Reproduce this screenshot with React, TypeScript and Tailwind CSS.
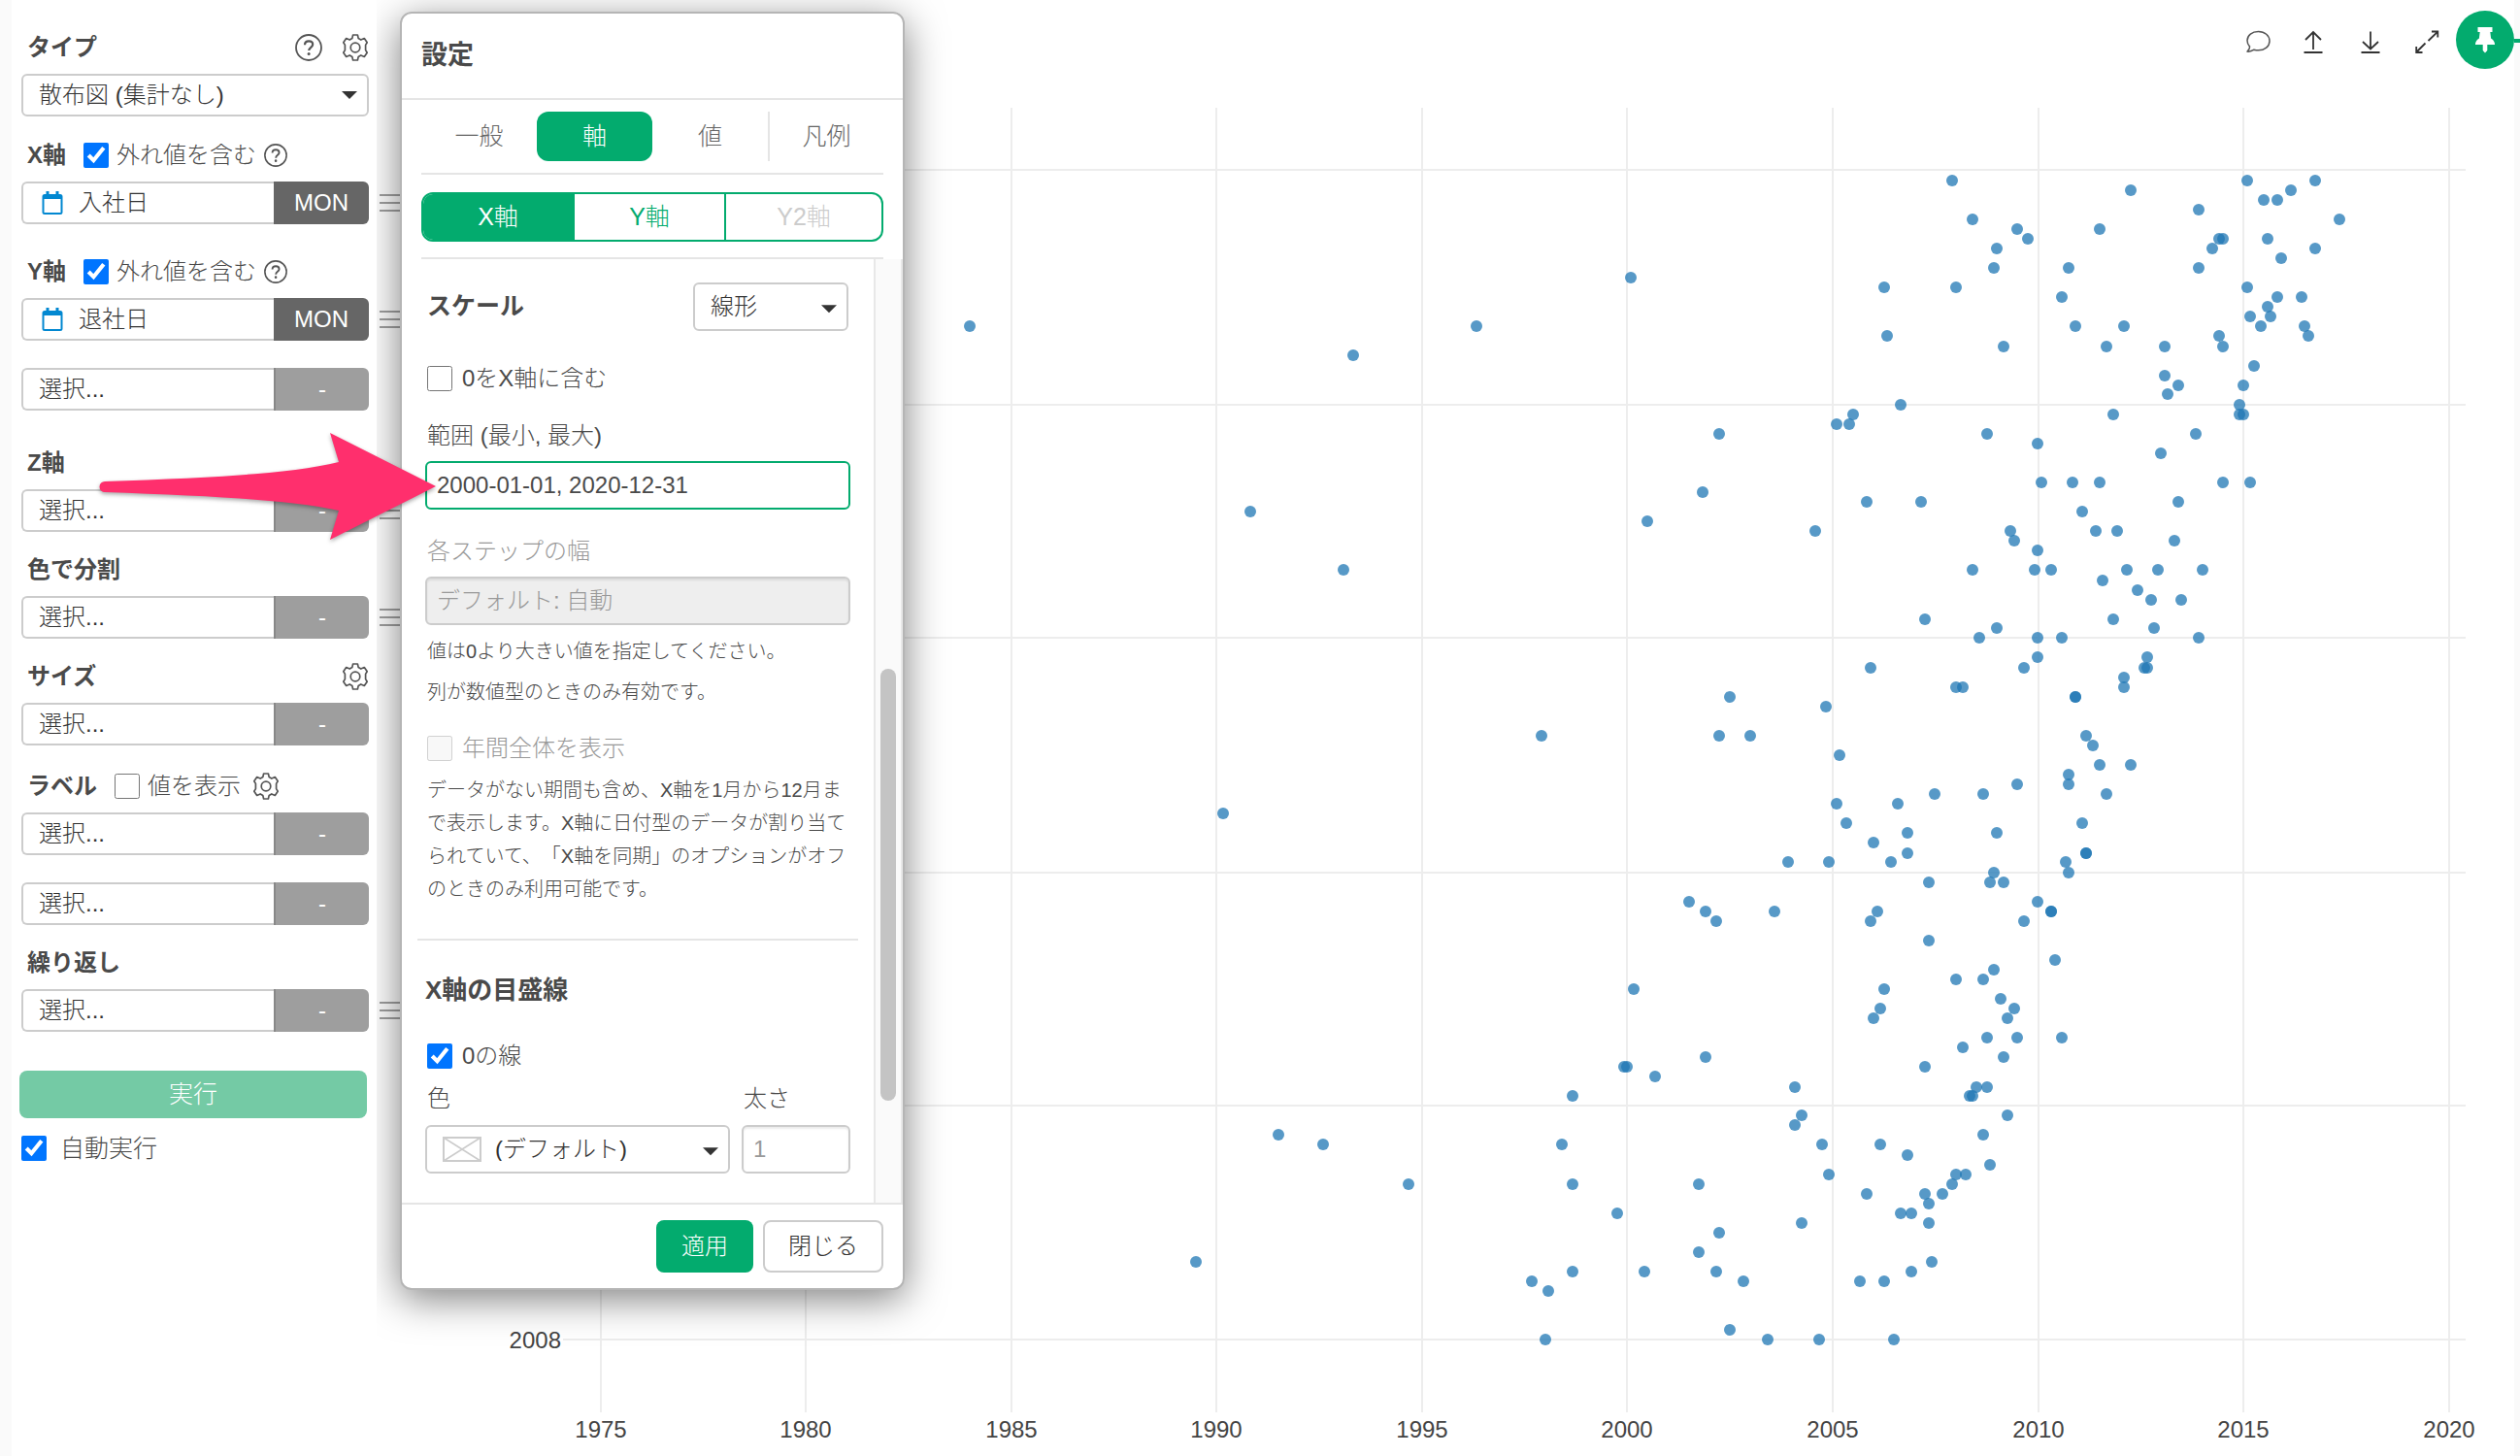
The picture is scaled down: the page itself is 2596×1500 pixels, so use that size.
import { useState } from "react";
import type { ReactNode } from "react";

const X_TICKS = [
  { label: "1975", x: 619 },
  { label: "1980", x: 830 },
  { label: "1985", x: 1042 },
  { label: "1990", x: 1253 },
  { label: "1995", x: 1465 },
  { label: "2000", x: 1676 },
  { label: "2005", x: 1888 },
  { label: "2010", x: 2100 },
  { label: "2015", x: 2311 },
  { label: "2020", x: 2523 },
];

const Y_LINES = [175, 417, 657, 899, 1139, 1380];

// [x, y] in chart units, one entry per employee
const POINTS: [number, number][] = [
  [999, 336], [1394, 366], [1521, 336], [1288, 527], [1384, 587], [1260, 838], [1317, 1169], [1363, 1179], [1451, 1220], [1232, 1300],
  [1680, 286], [2011, 186], [2032, 226], [2057, 256], [2054, 276], [1941, 296], [2015, 296], [1944, 346], [2064, 357], [1958, 417],
  [1909, 427], [1905, 437], [1892, 437], [1771, 447], [2047, 447], [1754, 507], [1697, 537], [1923, 517], [1979, 517], [1870, 547],
  [2071, 547], [2075, 557], [2078, 236], [2089, 246], [2163, 236], [2195, 196], [2265, 216], [2315, 186], [2332, 206], [2346, 206],
  [2360, 196], [2385, 186], [2410, 226], [2336, 246], [2385, 256], [2350, 266], [2286, 246], [2290, 246], [2279, 256], [2265, 276],
  [2131, 276], [2124, 306], [2138, 336], [2170, 357], [2188, 336], [2230, 357], [2230, 387], [2244, 397], [2233, 406], [2315, 296],
  [2346, 306], [2371, 306], [2336, 316], [2318, 326], [2339, 326], [2329, 336], [2374, 336], [2378, 346], [2286, 346], [2290, 357],
  [2322, 377], [2311, 397], [2307, 417], [2307, 427], [2311, 427], [2177, 427], [2262, 447], [2099, 457], [2226, 467], [2103, 497],
  [2135, 497], [2163, 497], [2290, 497], [2318, 497], [2145, 527], [2244, 517], [2159, 547], [2181, 547], [2240, 557], [2099, 567],
  [2032, 587], [1983, 638], [2057, 647], [2039, 657], [1927, 688], [2015, 708], [2022, 708], [1782, 718], [1881, 728], [1588, 758],
  [1771, 758], [1803, 758], [1895, 778], [1993, 818], [2043, 818], [1892, 828], [1955, 828], [1902, 848], [1965, 858], [2057, 858],
  [1930, 868], [1965, 879], [1842, 888], [1884, 888], [1948, 888], [2054, 899], [2050, 909], [2064, 909], [1987, 909], [1740, 929],
  [1757, 939], [1768, 949], [1828, 939], [1934, 939], [1927, 949], [1987, 969], [2015, 1009], [2043, 1009], [2054, 999], [1683, 1019],
  [1941, 1019], [2096, 587], [2113, 587], [2166, 598], [2191, 587], [2223, 587], [2269, 587], [2202, 608], [2216, 618], [2247, 618],
  [2177, 638], [2219, 647], [2099, 657], [2124, 657], [2265, 657], [2099, 677], [2085, 688], [2212, 677], [2209, 688], [2212, 688],
  [2188, 698], [2188, 708], [2138, 718], [2138, 718], [2149, 758], [2156, 768], [2163, 788], [2195, 788], [2131, 798], [2131, 808],
  [2078, 808], [2170, 818], [2145, 848], [2149, 879], [2149, 879], [2128, 888], [2131, 899], [2099, 929], [2113, 939], [2113, 939],
  [2085, 949], [2117, 989], [1937, 1039], [1930, 1049], [2061, 1029], [2075, 1039], [2068, 1049], [2047, 1069], [2078, 1069], [2124, 1069],
  [2022, 1079], [2064, 1089], [1983, 1099], [1757, 1089], [1673, 1099], [1676, 1099], [1705, 1109], [1620, 1129], [1849, 1120], [2036, 1120],
  [2047, 1120], [2029, 1129], [2032, 1129], [2068, 1149], [1856, 1149], [1849, 1159], [2043, 1169], [1609, 1179], [1877, 1179], [1937, 1179],
  [1965, 1190], [2050, 1200], [1884, 1210], [2015, 1210], [2025, 1210], [1620, 1220], [1750, 1220], [2011, 1220], [1923, 1230], [1983, 1230],
  [2001, 1230], [1987, 1240], [1666, 1250], [1958, 1250], [1969, 1250], [1856, 1260], [1987, 1260], [1771, 1270], [1750, 1290], [1990, 1300],
  [1620, 1310], [1694, 1310], [1768, 1310], [1969, 1310], [1578, 1320], [1796, 1320], [1916, 1320], [1941, 1320], [1595, 1330], [1782, 1370],
  [1592, 1380], [1821, 1380], [1874, 1380], [1951, 1380],
];

/* Icons */

function HelpIcon({ className }: { className: string }) {
  return (
    <svg viewBox="0 0 28 28" className={className} fill="none" stroke="#555" strokeWidth="1.8">
      <circle cx="14" cy="14" r="13" />
      <path d="M10 11.2c0-2.4 1.700-3.900 4.100-3.900s4.100 1.400 4.100 3.500c0 3-4 3-4 6.300" strokeWidth="2.200" />
      <circle cx="14.100" cy="20.600" r="1.500" fill="#555" stroke="none" />
    </svg>
  );
}

function GearIcon() {
  return (
    <svg viewBox="0 0 28 28" className="h-7 w-7" fill="none" stroke="#555" strokeWidth="1.700" strokeLinejoin="round">
      <path d="M11.600 1h4.800l.8 3.600 2.600 1.500 3.500-1.600 2.900 4.200-1.600 2.700v5.200l1.600 2.700-2.900 4.200-3.500-1.600-2.600 1.500-.8 3.600h-4.800l-.8-3.600-2.600-1.500-3.500 1.600-2.900-4.200 1.600-2.700v-5.200L1.800 8.700l2.900-4.200 3.500 1.600 2.600-1.500z" />
      <circle cx="14" cy="14" r="4.800" />
    </svg>
  );
}

function CalendarIcon() {
  return (
    <svg viewBox="0 0 22 24" className="h-6 w-[22px]">
      <path d="M4.500 0h3v3h7V0h3v3H19a2.500 2.500 0 0 1 2.500 2.500v16A2.500 2.500 0 0 1 19 24H3a2.500 2.500 0 0 1-2.500-2.500v-16A2.500 2.500 0 0 1 3 3h1.500z" fill="#0288d1" />
      <rect x="2.500" y="8" width="17" height="14" fill="#fff" />
    </svg>
  );
}

function Caret({ className }: { className: string }) {
  return (
    <svg viewBox="0 0 16 9" className={`pointer-events-none absolute top-1/2 right-3 h-[9px] w-4 ${className}`}>
      <path d="M0 .5h16L8 8.500z" fill="#333" />
    </svg>
  );
}

function DragHandle() {
  return (
    <span className="ml-[11px] flex flex-1 flex-col gap-1.5">
      <span className="h-0.5 bg-[#a0a0a0]" />
      <span className="h-0.5 bg-[#a0a0a0]" />
      <span className="h-0.5 bg-[#a0a0a0]" />
    </span>
  );
}

/* Sidebar parts */

function ColumnPicker({ label, column, func, drag }: { label: string; column?: string; func?: string; drag?: boolean }) {
  return (
    <div className="flex items-center">
      <div className="flex h-11 w-[358px] shrink-0">
        <button
          aria-label={label}
          className={`flex flex-1 items-center gap-4 rounded-l-md border-2 border-r-0 border-[#ccc] bg-white text-[#333] ${
            column ? "pl-[19px]" : "pl-4"
          }`}
        >
          {column && <CalendarIcon />}
          {column ?? "選択..."}
        </button>
        <button
          aria-label={`${label} 関数`}
          className={`w-[98px] rounded-r-md text-white ${func ? "bg-[#666]" : "border-l-2 border-[#888] bg-[#9e9e9e]"}`}
        >
          {func ?? "-"}
        </button>
      </div>
      {drag && <DragHandle />}
    </div>
  );
}

function Heading({ title, className, children }: { title: string; className: string; children?: ReactNode }) {
  return (
    <div className={`flex h-[54px] w-[358px] items-center pl-1.5 text-[#4a4a4a] ${className}`}>
      <h3 className="font-bold">{title}</h3>
      {children}
    </div>
  );
}

function OutlierToggle() {
  return (
    <>
      <label className="ml-[18px] flex items-center gap-2">
        <input type="checkbox" defaultChecked className="h-[26px] w-[26px] accent-[#0075ff]" />
        外れ値を含む
      </label>
      <button aria-label="ヘルプ" className="ml-2">
        <HelpIcon className="h-6 w-6" />
      </button>
    </>
  );
}

function Sidebar() {
  return (
    <aside className="w-[400px] shrink-0 bg-white pl-[10px]">
      <Heading title="タイプ" className="mt-[22px]">
        <button aria-label="ヘルプ" className="ml-auto">
          <HelpIcon className="h-7 w-7" />
        </button>
        <button aria-label="タイプの設定" className="ml-5">
          <GearIcon />
        </button>
      </Heading>
      <div className="relative w-[358px]">
        <select aria-label="タイプ" className="h-11 w-full appearance-none rounded-md border-2 border-[#ccc] bg-white pl-4 text-[#333]">
          <option>散布図 (集計なし)</option>
        </select>
        <Caret className="-translate-y-1/2" />
      </div>

      <Heading title="X軸" className="mt-[13px]">
        <OutlierToggle />
      </Heading>
      <ColumnPicker label="X軸" column="入社日" func="MON" drag />

      <Heading title="Y軸" className="mt-[22px]">
        <OutlierToggle />
      </Heading>
      <ColumnPicker label="Y軸" column="退社日" func="MON" drag />
      <div className="mt-7">
        <ColumnPicker label="Y軸 2" />
      </div>

      <Heading title="Z軸" className="mt-[27px]" />
      <ColumnPicker label="Z軸" drag />

      <Heading title="色で分割" className="mt-3" />
      <ColumnPicker label="色で分割" drag />

      <Heading title="サイズ" className="mt-3">
        <button aria-label="サイズの設定" className="ml-auto">
          <GearIcon />
        </button>
      </Heading>
      <ColumnPicker label="サイズ" />

      <Heading title="ラベル" className="mt-[15px]">
        <label className="ml-[18px] flex items-center gap-2">
          <input type="checkbox" className="h-[26px] w-[26px]" />
          値を表示
        </label>
        <button aria-label="ラベルの設定" className="ml-3">
          <GearIcon />
        </button>
      </Heading>
      <ColumnPicker label="ラベル" />
      <div className="mt-7">
        <ColumnPicker label="ラベル 2" />
      </div>

      <Heading title="繰り返し" className="mt-3" />
      <ColumnPicker label="繰り返し" drag />

      <button className="mt-10 -ml-0.5 block h-[49px] w-[358px] rounded-lg bg-[#74caa5] text-[25px] text-white">実行</button>
      <label className="mt-[18px] flex items-center gap-[14px] text-[25px] leading-[26px] text-[#4a4a4a]">
        <input type="checkbox" defaultChecked className="h-[26px] w-[26px] accent-[#0075ff]" />
        自動実行
      </label>
    </aside>
  );
}

/* Settings dialog */

const TABS = ["一般", "軸", "値", "凡例"];
const AXES = ["X軸", "Y軸", "Y2軸"];

function SettingsDialog() {
  const [tab, setTab] = useState("軸");
  const [axis, setAxis] = useState("X軸");

  return (
    <div
      role="dialog"
      aria-label="設定"
      className="absolute top-3 left-[412px] w-[520px] overflow-hidden rounded-xl border-2 border-[#b5b5b5] bg-white text-[#4a4a4a]"
    >
      <h2 className="flex h-[89px] items-center border-b-2 border-[#e5e5e5] px-5 text-[27px] font-bold">設定</h2>

      <div className="px-5">
        <div role="tablist" className="grid grid-cols-4 border-b-2 border-[#e5e5e5] py-3 text-[25px]">
          {TABS.map((t) => (
            <button
              key={t}
              role="tab"
              aria-selected={t === tab}
              onClick={() => setTab(t)}
              className={`h-[51px] ${t === tab ? "rounded-xl bg-[#03ab6e] text-white" : "text-[#666]"} ${
                t === "凡例" ? "border-l-2 border-[#e5e5e5]" : ""
              }`}
            >
              {t}
            </button>
          ))}
        </div>
        <div className="border-b-2 border-[#e5e5e5] pt-[18px] pb-4">
          <div className="flex h-[51px] divide-x-2 divide-[#03ab6e] overflow-hidden rounded-xl border-2 border-[#03ab6e] text-[25px]">
            {AXES.map((a) => (
              <button
                key={a}
                disabled={a === "Y2軸"}
                onClick={() => setAxis(a)}
                className={`w-[156px] last:flex-1 disabled:text-[#ccc] ${a === axis ? "bg-[#03ab6e] text-white" : "text-[#03ab6e]"}`}
              >
                {a}
              </button>
            ))}
          </div>
        </div>
      </div>

      <div className="flex">
        <div className="flex-1 px-4 pt-6 pb-[30px]">
          <div className="px-2">
            <div className="flex items-center justify-between">
              <label htmlFor="scale" className="pl-0.5 text-[25px] font-bold">スケール</label>
              <div className="relative mr-0.5 w-40">
                <select id="scale" className="h-[50px] w-full appearance-none rounded-md border-2 border-[#ccc] bg-white pl-4 text-[#333]">
                  <option>線形</option>
                </select>
                <Caret className="-translate-y-1/4" />
              </div>
            </div>
            <label className="mt-9 flex items-center gap-[10px] pl-0.5 leading-[26px]">
              <input type="checkbox" className="h-[26px] w-[26px]" />
              0をX軸に含む
            </label>

            <label htmlFor="range" className="mt-[34px] block pl-0.5 leading-6">範囲 (最小, 最大)</label>
            <input
              id="range"
              type="text"
              defaultValue="2000-01-01, 2020-12-31"
              className="mt-[14px] block h-[50px] w-full rounded-md border-2 border-[#03ab6e] pl-[10px] outline-none"
            />

            <label htmlFor="step" className="mt-[31px] block pl-0.5 leading-6 text-[#999]">各ステップの幅</label>
            <input
              id="step"
              type="text"
              disabled
              placeholder="デフォルト: 自動"
              className="mt-[14px] block h-[50px] w-full rounded-md border-2 border-[#ccc] bg-[#eee] pl-[10px] shadow-[inset_0_2px_2px_rgba(0,0,0,0.08)] placeholder:text-[#999]"
            />
            <p className="mt-[10px] pl-0.5 text-xl leading-[34px]">値は0より大きい値を指定してください。</p>
            <p className="mt-2 pl-0.5 text-xl leading-[34px]">列が数値型のときのみ有効です。</p>

            <label className="mt-7 flex items-center gap-[10px] pl-0.5 leading-[26px] text-[#999]">
              <input type="checkbox" disabled className="h-[26px] w-[26px]" />
              年間全体を表示
            </label>
            <p className="mt-[13px] pl-0.5 text-xl leading-[34px] [text-spacing-trim:space-all]">
              データがない期間も含め、X軸を1月から12月まで表示します。X軸に日付型のデータが割り当てられていて、「X軸を同期」のオプションがオフのときのみ利用可能です。
            </p>
          </div>

          <hr className="mt-[34px] border-t-2 border-[#e5e5e5]" />

          <div className="px-2">
            <h3 className="mt-[38px] text-[26px] leading-[26px] font-bold">X軸の目盛線</h3>
            <label className="mt-[42px] flex items-center gap-[10px] pl-0.5 leading-[26px]">
              <input type="checkbox" defaultChecked className="h-[26px] w-[26px] accent-[#0075ff]" />
              0の線
            </label>
            <div className="mt-[19px] grid grid-cols-[1fr_112px] gap-x-3 gap-y-[15px] leading-6">
              <label htmlFor="line-color" className="pl-0.5">色</label>
              <label htmlFor="line-width" className="pl-0.5">太さ</label>
              <div className="relative">
                <select id="line-color" className="h-[50px] w-full appearance-none rounded-md border-2 border-[#ccc] bg-white pl-[70px] text-[#333]">
                  <option>(デフォルト)</option>
                </select>
                <svg viewBox="0 0 40 26" className="pointer-events-none absolute top-3 left-[18px] h-[26px] w-10" fill="none" stroke="#ccc">
                  <rect x="1" y="1" width="38" height="24" strokeWidth="2" />
                  <path d="M1 1l38 24M39 1L1 25" strokeWidth="1.500" />
                </svg>
                <Caret className="-translate-y-1/4" />
              </div>
              <input
                id="line-width"
                type="text"
                placeholder="1"
                className="h-[50px] w-full rounded-md border-2 border-[#ccc] pl-[10px] shadow-[inset_0_2px_2px_rgba(0,0,0,0.08)] placeholder:text-[#999]"
              />
            </div>
          </div>
        </div>

        {/* Scroll bar */}
        <div className="flex w-[30px] justify-center border-x-2 border-[#e8e8e8] bg-[#fafafa] pt-[422px]">
          <div className="h-[445px] w-4 rounded-full bg-[#c4c4c4]" />
        </div>
      </div>

      <div className="flex justify-end gap-[10px] border-t-2 border-[#e5e5e5] px-5 py-4">
        <button className="h-[54px] w-[100px] rounded-lg bg-[#03ab6e] text-white">適用</button>
        <button className="h-[54px] w-[124px] rounded-lg border-2 border-[#ccc] bg-white text-[#333]">閉じる</button>
      </div>
    </div>
  );
}

/* Chart */

function Toolbar() {
  return (
    <div className="flex h-[100px] items-start justify-end pt-[11px] text-[#333]">
      <div className="flex h-16 items-center gap-8 pr-[17px]">
        <button aria-label="コメント">
          <svg viewBox="0 0 26 24" className="h-6 w-[26px]" fill="none" stroke="#555" strokeWidth="1.500" strokeLinejoin="round">
            <path d="M13.500 1.500C7 1.500 2 5.300 2 10.800c0 2.700 1 4.700 2.600 6.300 0 2-.9 3.800-2.600 5 2.600.3 5-.5 7-1.900 1.400.4 2.900.6 4.500.6C20 20.800 25 16.800 25 11.200S20 1.500 13.500 1.500z" />
          </svg>
        </button>
        <button aria-label="エクスポート">
          <svg viewBox="0 0 26 24" className="h-6 w-[26px]" fill="none" stroke="currentColor" strokeWidth="1.800">
            <path d="M12 20V2M4 10l8-8 8 8M2.500 23h19" />
          </svg>
        </button>
        <button aria-label="ダウンロード">
          <svg viewBox="0 0 26 24" className="h-6 w-[26px]" fill="none" stroke="currentColor" strokeWidth="1.800">
            <path d="M13 1.500v18M5 12l8 7.500 8-7.500M3.500 23h19" />
          </svg>
        </button>
        <button aria-label="拡大">
          <svg viewBox="0 0 26 24" className="h-6 w-[26px]" fill="none" stroke="currentColor" strokeWidth="1.800">
            <path d="M14.500 11L24 1.800M18 1.500h6.300v6M11.500 13.500L2.500 22.500M2.200 17v6h6.300" />
          </svg>
        </button>
      </div>
      <button aria-label="ピン留め" className="flex h-[60px] w-[60px] items-center justify-center rounded-full bg-[#03ab6e]">
        <svg viewBox="0 0 22 28" className="h-7 w-[22px]" fill="#fff">
          <path d="M3.500 1h15v5h-2.200l.8 6.500c2 1 3.500 2.900 3.900 5.500v1h-7.700v6L11 27.500 8.700 25v-6H1v-1c.4-2.600 1.900-4.500 3.900-5.500L5.700 6H3.500z" />
        </svg>
      </button>
    </div>
  );
}

function ScatterChart() {
  return (
    <svg viewBox="412 100 2178 1400" className="block h-auto w-full" role="img" aria-label="散布図">
      <g fill="#ededed">
        {X_TICKS.map((t) => (
          <rect key={t.label} x={t.x - 1} y="111" width="2" height="1344" />
        ))}
        {Y_LINES.map((y) => (
          <rect key={y} x="580" y={y - 1} width="1960" height="2" />
        ))}
      </g>
      <g fill="#1f77b4" fillOpacity="0.75">
        {POINTS.map(([x, y], i) => (
          <circle key={i} cx={x} cy={y} r="6" />
        ))}
      </g>
      <g fill="#444" fontSize="24">
        {X_TICKS.map((t) => (
          <text key={t.label} x={t.x} y="1481" textAnchor="middle">
            {t.label}
          </text>
        ))}
        <text x="578" y="1389" textAnchor="end">2008</text>
      </g>
    </svg>
  );
}

export default function App() {
  return (
    <div className="relative flex min-h-screen overflow-hidden bg-[#fafafa] font-['Liberation_Sans','Noto_Sans_CJK_JP',sans-serif] text-2xl font-light">
      <div className="w-3 shrink-0" />
      <Sidebar />
      <main className="min-w-0 flex-1 bg-white">
        <Toolbar />
        <ScatterChart />
      </main>
      <div className="w-1.5 shrink-0 pt-10">
        <div className="h-1 bg-[#03ab6e]" />
      </div>

      {/* Dialog shadow, clipped so it never falls on the sidebar fields */}
      <div className="pointer-events-none absolute top-0 right-0 bottom-0 left-[388px] overflow-hidden">
        <div className="mt-3 ml-6 h-[1316px] w-[520px] rounded-xl shadow-[0_10px_40px_rgba(0,0,0,0.5)]" />
      </div>
      <SettingsDialog />

      {/* Callout arrow pointing at the range field */}
      <svg viewBox="98 440 360 124" className="pointer-events-none absolute top-[440px] left-[98px] h-[124px] w-[360px] drop-shadow-[0_2px_2px_rgba(0,0,0,0.35)]">
        <path d="M108 496C220 492 300 488 349 476L340 446L449 501L340 556L349 526C300 515 220 511 108 507A5.500 5.500 0 0 1 108 496z" fill="#ff2f6d" />
      </svg>
    </div>
  );
}
